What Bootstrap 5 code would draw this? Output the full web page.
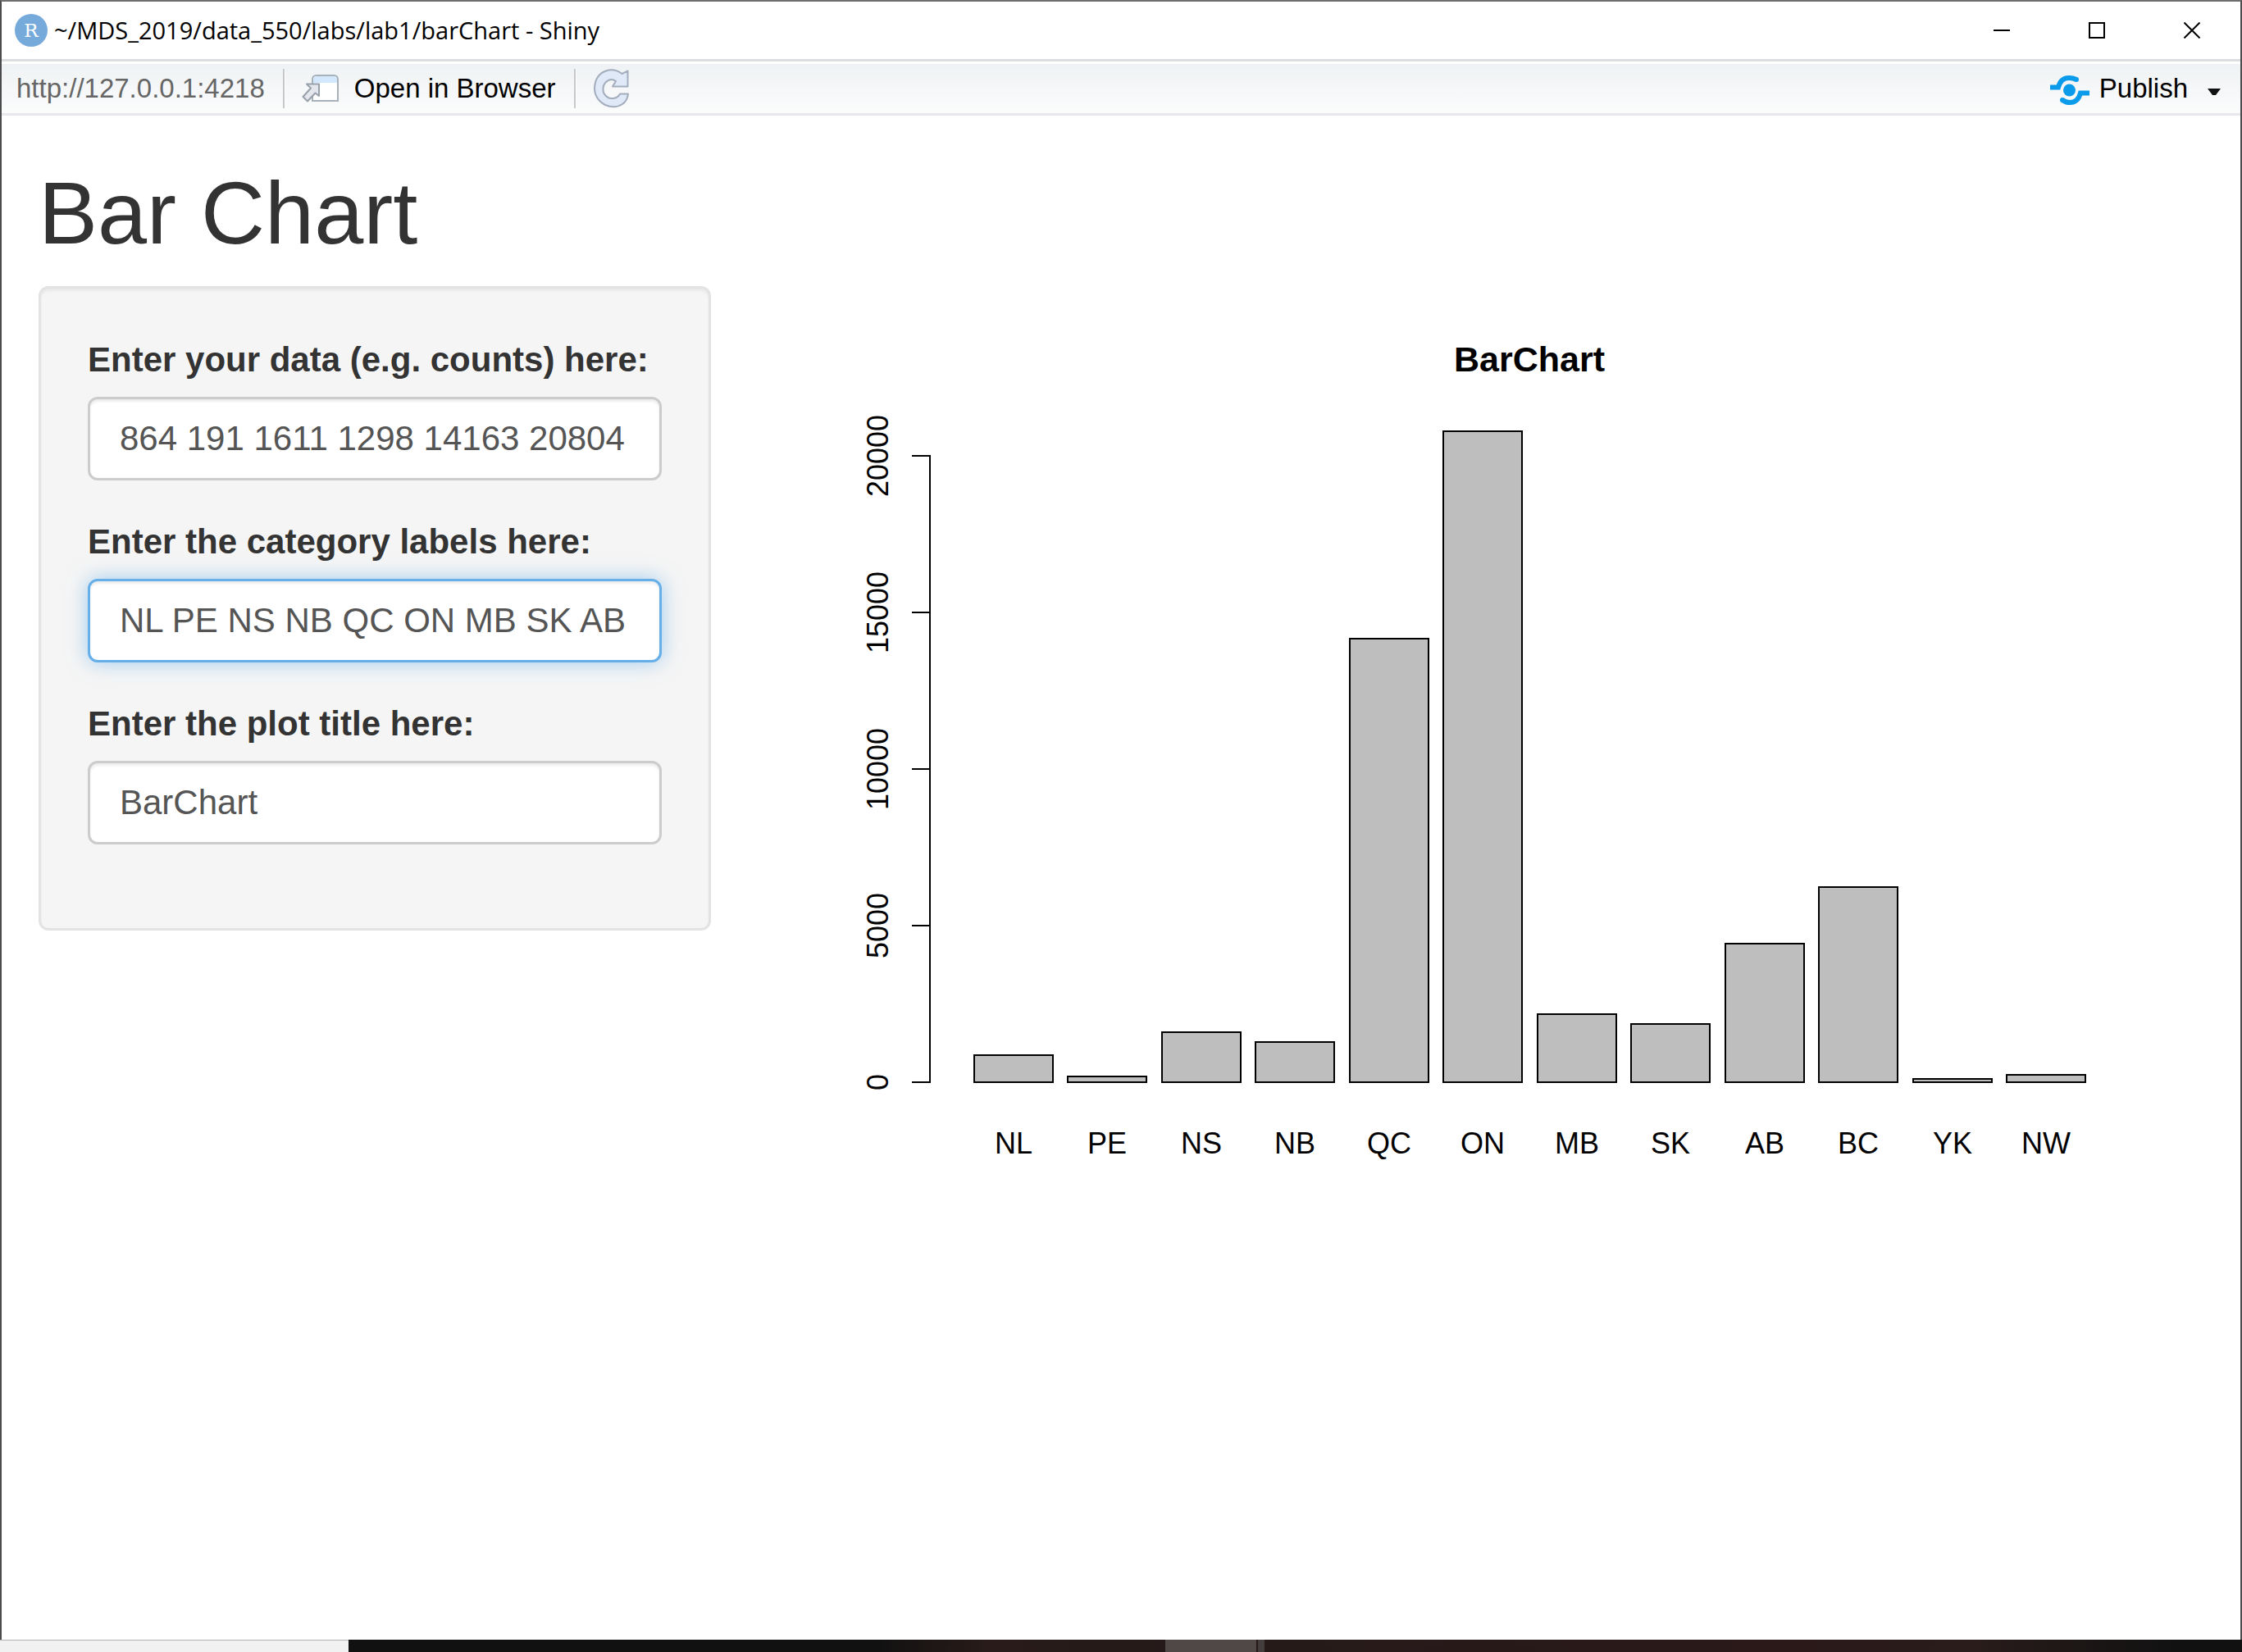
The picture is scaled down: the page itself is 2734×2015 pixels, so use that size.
<!DOCTYPE html>
<html lang="en">
<head>
<meta charset="utf-8">
<meta name="viewport" content="width=device-width, initial-scale=1">
<title>~/MDS_2019/data_550/labs/lab1/barChart - Shiny</title>
<link href="https://cdn.jsdelivr.net/npm/bootstrap@5.3.0/dist/css/bootstrap.min.css" rel="stylesheet">
<style>
body { font-family: "Liberation Sans", Arial, sans-serif; font-size: 42px; line-height: 60px; color: #333; background: #fff; }
svg { display: block; flex: none; }
.app-window { border: 2px solid #4c4c4e; border-top-color: #6e6e6e; border-bottom: 0; background: #fff; }
.title-strip { height: 73px; border-bottom: 3px solid #dcdde1; font-family: "Open Sans", "Noto Sans", sans-serif; font-size: 29px; line-height: 40px; color: #000; padding: 0 1px 0 16px; }
.win-btn { width: 116px; height: 70px; border: 0; background: none; padding: 0; }
.tool-strip { height: 66px; border-top: 3px solid #fff; border-bottom: 3px solid #e8e8ec; background: linear-gradient(#eff2f4, #fbfcfc); font-size: 33px; line-height: 40px; color: #000; padding: 0 24px 0 18px; }
.tool-btn { border: 0; background: none; padding: 0; color: #000; }
.open-btn { gap: 18px; }
.publish-btn { gap: 12px; }
.url-text { color: #666; }
.tool-rule { width: 3px; height: 48px; margin: 0 20px 0 22px; background: linear-gradient(90deg, #c6c8ca 67%, #fff 67%); }
.page-area { --bs-gutter-x: 90px; }
.page-area .row { --bs-gutter-x: 90px; }
.page-title { font-size: 108px; line-height: 118px; font-weight: 400; margin: 60px 0 30px; color: #333; }
.side-well { background: #f5f5f5; border: 3px solid #e3e3e3; border-radius: 12px; padding: 57px; box-shadow: inset 0 3px 3px rgba(0,0,0,.05); }
.form-label { font-weight: 700; margin-bottom: 15px; display: block; }
.form-control, .form-control:focus { height: 102px; font-size: 42px; line-height: 60px; color: #555; background: #fff; border: 3px solid #ccc; border-radius: 12px; padding: 18px 36px; box-shadow: inset 0 3px 3px rgba(0,0,0,.075); }
.form-control.is-current, .form-control:focus { border-color: #66afe9; box-shadow: inset 0 3px 3px rgba(0,0,0,.075), 0 0 24px rgba(102,175,233,.6); }
.field-group { margin-bottom: 45px; }
.plot-axis { stroke: #000; stroke-width: 2; fill: none; shape-rendering: crispEdges; }
.plot-bars { stroke: #000; stroke-width: 2; fill: #bebebe; shape-rendering: crispEdges; }
.plot-labels { font-size: 36px; fill: #000; text-anchor: middle; }
.plot-title { font-size: 43px; font-weight: 700; fill: #000; text-anchor: middle; }
.desk-strip { height: 15px; background: linear-gradient(90deg, #111 39%, #281b19 44%, #251a19 52%, #2b191a 80%, #291c1b 88%, #111 97%); }
.desk-light { width: 425px; background: #f1f1f1; border-top: 1px solid #b3b3b3; }
.desk-task { width: 111px; background: #504847; margin-left: 996px; }
.desk-task-edge { width: 8px; background: #443d3d; margin-left: 2px; }
</style>
</head>
<body>
<div class="d-flex flex-column min-vh-100">
  <div class="app-window flex-grow-1">
    <header class="title-strip d-flex align-items-center">
      <svg width="40" height="40" viewBox="0 0 40 40" aria-hidden="true"><circle cx="20" cy="20" r="20" fill="#75aadb"/><text x="20" y="28" font-family="DejaVu Serif, serif" font-size="23" fill="#fff" text-anchor="middle">R</text></svg>
      <div class="ps-2 me-auto">~/MDS_2019/data_550/labs/lab1/barChart - Shiny</div>
      <button class="win-btn d-flex align-items-center justify-content-center" aria-label="Minimize"><svg width="20" height="20"><path d="M0 10H20" stroke="#000" stroke-width="2"/></svg></button>
      <button class="win-btn d-flex align-items-center justify-content-center" aria-label="Maximize"><svg width="20" height="20"><path d="M1 1H19V19H1Z" fill="none" stroke="#000" stroke-width="2"/></svg></button>
      <button class="win-btn d-flex align-items-center justify-content-center" aria-label="Close"><svg width="20" height="20"><path d="M.5 .5L19.500 19.500M19.500 .5L.5 19.500" stroke="#000" stroke-width="2"/></svg></button>
    </header>
    <div class="tool-strip d-flex align-items-center">
      <span class="url-text">http://127.0.0.1:4218</span>
      <span class="tool-rule"></span>
      <button class="tool-btn open-btn d-flex align-items-center">
        <svg width="46" height="36" viewBox="0 0 46 36" aria-hidden="true">
          <path d="M13 33V7Q13 2 18 2H39Q44 2 44 7V33Z" fill="#fff" stroke="#a6b1ba" stroke-width="2"/>
          <path d="M14 11V7Q14 3 18 3H39Q43 3 43 7V11Z" fill="#d3e8fd"/>
          <path d="M6 12.500H21V27L16.500 23.500L7 33.500L1.500 28L11 17.500Z" fill="#e4e6ee" stroke="#98a1aa" stroke-width="2" stroke-linejoin="round"/>
        </svg>Open in Browser</button>
      <span class="tool-rule"></span>
      <button class="tool-btn" aria-label="Reload"><svg width="46" height="50" viewBox="-2 -2 46 50">
        <path d="M33.500 5L40.500 1.500V20.500H22L26 14Q20 9.500 14 15Q9 20 11 28Q15 36 23 35Q29 34 31 29.500H41Q40 38 34 42Q25 48 13 43Q0 36 0 22Q1 6 14 1.500Q24 -2 33.500 5Z" fill="#dfe9f8" stroke="#a3adbd" stroke-width="2" stroke-linejoin="round"/></svg></button>
      <button class="tool-btn publish-btn d-flex align-items-center ms-auto">
        <svg class="mt-1" width="48" height="38" viewBox="0 0 48 38" aria-hidden="true"><circle cx="23.500" cy="19" r="7.500" fill="#0a9bea"/><path d="M0 15.500H10Q13 4 23 4Q28 4 32 6" fill="none" stroke="#0a9bea" stroke-width="6"/><circle cx="32" cy="6" r="3" fill="#0a9bea"/><path d="M48 22.500H37Q34 34 24 34Q19 34 15 31" fill="none" stroke="#0a9bea" stroke-width="6"/><circle cx="15" cy="31" r="3" fill="#0a9bea"/></svg>
        <span class="pe-2 me-1">Publish</span>
        <svg class="mt-2" width="16" height="8" viewBox="0 0 16 8" aria-hidden="true"><path d="M0 0H16L10 8H6Z" fill="#111"/></svg>
      </button>
    </div>
    <main class="container-fluid page-area">
      <h1 class="page-title">Bar Chart</h1>
      <div class="row">
        <div class="col-4">
          <form class="side-well">
            <div class="field-group"><label class="form-label" for="counts">Enter your data (e.g. counts) here:</label><input class="form-control" id="counts" type="text" value="864 191 1611 1298 14163 20804"></div>
            <div class="field-group"><label class="form-label" for="cats">Enter the category labels here:</label><input class="form-control is-current" id="cats" type="text" value="NL PE NS NB QC ON MB SK AB"></div>
            <div class="field-group"><label class="form-label" for="plot-name">Enter the plot title here:</label><input class="form-control" id="plot-name" type="text" value="BarChart"></div>
          </form>
        </div>
        <div class="col-8">
          <svg class="w-100 h-auto" viewBox="0 0 1730 1200" role="img" aria-label="Bar chart of counts by category">
            <text class="plot-title" x="908" y="104">BarChart</text>
            <path class="plot-axis" d="M177 206V972M155 207H178M155 398H178M155 589H178M155 780H178M155 971H178"/>
            <g class="plot-labels">
              <text transform="translate(126 207) rotate(-90)">20000</text>
              <text transform="translate(126 398) rotate(-90)">15000</text>
              <text transform="translate(126 589) rotate(-90)">10000</text>
              <text transform="translate(126 780) rotate(-90)">5000</text>
              <text transform="translate(126 971) rotate(-90)">0</text>
            </g>
            <g class="plot-bars">
              <rect x="231" y="938" width="96" height="33"/>
              <rect x="345" y="964" width="96" height="7"/>
              <rect x="460" y="910" width="96" height="61"/>
              <rect x="574" y="922" width="96" height="49"/>
              <rect x="689" y="430" width="96" height="541"/>
              <rect x="803" y="177" width="96" height="794"/>
              <rect x="918" y="888" width="96" height="83"/>
              <rect x="1032" y="900" width="96" height="71"/>
              <rect x="1147" y="802" width="96" height="169"/>
              <rect x="1261" y="733" width="96" height="238"/>
              <rect x="1376" y="967" width="96" height="4"/>
              <rect x="1490" y="962" width="96" height="9"/>
            </g>
            <g class="plot-labels">
              <text x="279" y="1058">NL</text><text x="393" y="1058">PE</text><text x="508" y="1058">NS</text><text x="622" y="1058">NB</text><text x="737" y="1058">QC</text><text x="851" y="1058">ON</text><text x="966" y="1058">MB</text><text x="1080" y="1058">SK</text><text x="1195" y="1058">AB</text><text x="1309" y="1058">BC</text><text x="1424" y="1058">YK</text><text x="1538" y="1058">NW</text>
            </g>
          </svg>
        </div>
      </div>
    </main>
  </div>
  <div class="desk-strip d-flex"><div class="desk-light"></div><div class="desk-task"></div><div class="desk-task-edge"></div></div>
</div>
<script src="https://cdn.jsdelivr.net/npm/bootstrap@5.3.0/dist/js/bootstrap.bundle.min.js"></script>
</body>
</html>
